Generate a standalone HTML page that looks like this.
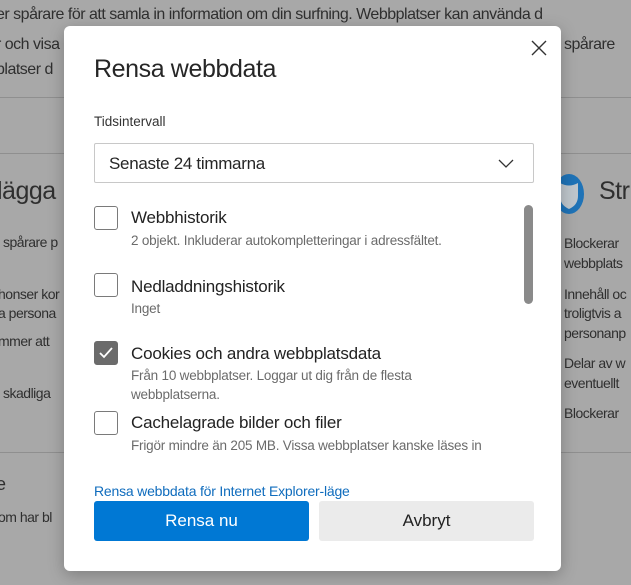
<!DOCTYPE html>
<html><head><meta charset="utf-8"><style>
*{margin:0;padding:0;box-sizing:border-box}
body{width:631px;height:585px;overflow:hidden;background:#a8a8a8;font-family:"Liberation Sans",sans-serif;position:relative;color:#2a2a2a}
.bg{position:absolute;color:#2f2f2f;font-size:16px;white-space:nowrap;letter-spacing:-0.5px}
.line{position:absolute;left:0;width:631px;height:1px;background:#8f8f8f}
.dlg{position:absolute;left:64px;top:26px;width:497px;height:545px;background:#fff;border-radius:6px;box-shadow:0 4px 16px rgba(0,0,0,.25)}
.a{position:absolute;white-space:nowrap}
.cb{position:absolute;left:30px;width:24px;height:24px;border:1px solid #7a7a7a;border-radius:3px;background:#fff}
.t{position:absolute;left:67px;font-size:17px;color:#222;letter-spacing:-0.2px}
.s{position:absolute;left:67px;font-size:13.5px;color:#6b6b6b;letter-spacing:-0.2px;line-height:19px}
</style></head><body>
<div class="bg" style="left:-4px;top:6px">er spårare för att samla in information om din surfning. Webbplatser kan använda d</div>
<div class="bg" style="left:-4px;top:36px">r och visa</div>
<div class="bg" style="left:564px;top:36px">spårare</div>
<div class="bg" style="left:-4px;top:61px">platser d</div>
<div class="line" style="top:97px"></div>
<div class="line" style="top:153px"></div>
<div class="line" style="top:452px"></div>
<div class="bg" style="left:-3px;top:177px;font-size:25px">lägga</div>
<div class="bg" style="left:599px;top:177px;font-size:25px">Str</div>
<svg style="position:absolute;left:553px;top:173px" width="34" height="44" viewBox="0 0 34 44"><ellipse cx="16" cy="21" rx="15" ry="20" fill="#1f73b7"/><path d="M7 10 Q16 15 25 10 L25 23 Q25 32 16 36 Q7 32 7 23Z" fill="#bfc6cc"/></svg>
<div class="bg" style="left:3px;top:234px;font-size:14px">spårare p</div>
<div class="bg" style="left:-2px;top:286px;font-size:14px">honser kor</div>
<div class="bg" style="left:-2px;top:305px;font-size:14px">a persona</div>
<div class="bg" style="left:-2px;top:333px;font-size:14px">mmer att</div>
<div class="bg" style="left:3px;top:385px;font-size:14px">skadliga</div>
<div class="bg" style="left:564px;top:235px;font-size:14px">Blockerar</div>
<div class="bg" style="left:564px;top:255px;font-size:14px">webbplats</div>
<div class="bg" style="left:564px;top:286px;font-size:14px">Innehåll oc</div>
<div class="bg" style="left:564px;top:305px;font-size:14px">troligtvis a</div>
<div class="bg" style="left:564px;top:325px;font-size:14px">personanp</div>
<div class="bg" style="left:564px;top:355px;font-size:14px">Delar av w</div>
<div class="bg" style="left:564px;top:375px;font-size:14px">eventuellt</div>
<div class="bg" style="left:564px;top:405px;font-size:14px">Blockerar</div>
<div class="bg" style="left:-4px;top:474px;font-size:18px">e</div>
<div class="bg" style="left:-2px;top:509px;font-size:14px">om har bl</div>

<div class="dlg">
 <svg style="position:absolute;left:467px;top:14px" width="16" height="16" viewBox="0 0 16 16"><path d="M1 1L15 15M15 1L1 15" stroke="#333" stroke-width="1.4"/></svg>
 <div class="a" style="left:30px;top:29px;font-size:25px;color:#262626;letter-spacing:-0.4px">Rensa webbdata</div>
 <div class="a" style="left:30px;top:88px;font-size:13.5px;color:#333">Tidsintervall</div>
 <div class="a" style="left:30px;top:117px;width:440px;height:40px;border:1px solid #c8c8c8;border-radius:2px">
  <div class="a" style="left:14px;top:10px;font-size:17px;color:#262626;letter-spacing:-0.3px">Senaste 24 timmarna</div>
  <svg style="position:absolute;left:403px;top:13px" width="16" height="12" viewBox="0 0 16 12"><path d="M1 3L8 10L15 3" fill="none" stroke="#333" stroke-width="1.3"/></svg>
 </div>
 <div class="cb" style="top:180px"></div>
 <div class="t" style="top:182px">Webbhistorik</div>
 <div class="s" style="top:205px">2 objekt. Inkluderar autokompletteringar i adressfältet.</div>
 <div class="cb" style="top:247px"></div>
 <div class="t" style="top:251px">Nedladdningshistorik</div>
 <div class="s" style="top:273px">Inget</div>
 <div class="cb" style="top:315px;background:#6b6b6b;border-color:#6b6b6b"><svg width="22" height="22" viewBox="0 0 22 22"><path d="M5 11L9 15L17 6" fill="none" stroke="#fff" stroke-width="1.8"/></svg></div>
 <div class="t" style="top:318px">Cookies och andra webbplatsdata</div>
 <div class="s" style="top:340px">Från 10 webbplatser. Loggar ut dig från de flesta<br>webbplatserna.</div>
 <div class="cb" style="top:385px"></div>
 <div class="t" style="top:387px">Cachelagrade bilder och filer</div>
 <div class="s" style="top:410px">Frigör mindre än 205 MB. Vissa webbplatser kanske läses in</div>
 <div class="a" style="left:460px;top:179px;width:9px;height:99px;background:#8a8a8a;border-radius:5px"></div>
 <div class="a" style="left:30px;top:457px;font-size:14px;color:#0f6cbd;letter-spacing:-0.2px">Rensa webbdata för Internet Explorer-läge</div>
 <div class="a" style="left:30px;top:475px;width:215px;height:40px;background:#0078d4;border-radius:3px;color:#fff;font-size:17px;text-align:center;line-height:40px">Rensa nu</div>
 <div class="a" style="left:255px;top:475px;width:215px;height:40px;background:#ebebeb;border-radius:3px;color:#222;font-size:17px;text-align:center;line-height:40px">Avbryt</div>
</div>
</body></html>
